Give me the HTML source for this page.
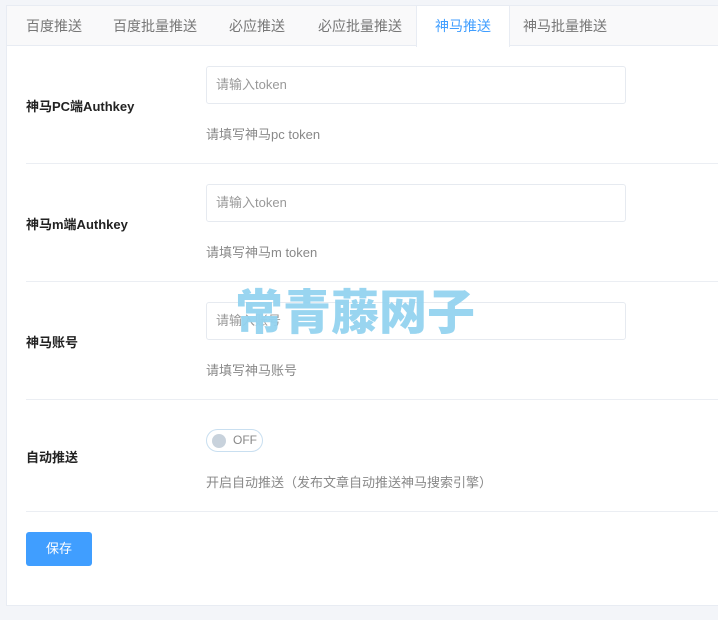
<!DOCTYPE html>
<html><head><meta charset="utf-8"><style>
*{margin:0;padding:0;box-sizing:border-box}
body{width:718px;height:620px;background:#f3f5f9;font-family:"Liberation Sans","Noto Sans CJK SC",sans-serif;position:relative;overflow:hidden}
.panel{position:absolute;left:6px;top:5px;width:712px;height:601px;background:#fff;border:1px solid #e8ecf3;border-right:none}
.tabs{position:absolute;left:0;top:0;width:712px;height:40px;background:#f9f9fa;border-bottom:1px solid #e8ecf3}
.tab{position:absolute;top:0;height:40px;line-height:40px;font-size:14px;color:#777}
.tab.on{background:#fff;color:#409eff;border-left:1px solid #e8ecf3;border-right:1px solid #e8ecf3;height:41px;text-align:center}
.lbl{position:absolute;left:19px;font-size:13px;font-weight:bold;color:#222}
.inp{position:absolute;left:199px;width:420px;height:38px;border:1px solid #e6eaf0;border-radius:3px;font-size:13px;color:#999;line-height:36px;padding-left:9px}
.help{position:absolute;left:199px;font-size:13px;color:#888}
.sep{position:absolute;left:19px;right:0;height:1px;background:#ebeef3}
.tog{position:absolute;left:199px;top:423px;width:57px;height:23px;border:1px solid #c9dff0;border-radius:12px;font-size:12px;color:#888;line-height:21px;padding-left:26px}
.tog:before{content:"";position:absolute;left:5px;top:4px;width:14px;height:14px;border-radius:50%;background:#c8d2dc}
.btn{position:absolute;left:19px;top:526px;width:66px;height:34px;background:#409eff;border-radius:3px;color:#fff;font-size:13px;text-align:center;line-height:34px}
.wm{position:absolute;left:235px;top:279px;font-size:48px;font-weight:900;color:#94d3f0;letter-spacing:0;opacity:.95;font-family:"Noto Sans CJK SC",sans-serif;line-height:58px}
</style></head><body>
<div class="panel">
<div class="tabs">
<div class="tab" style="left:19px">百度推送</div>
<div class="tab" style="left:106px">百度批量推送</div>
<div class="tab" style="left:222px">必应推送</div>
<div class="tab" style="left:311px">必应批量推送</div>
<div class="tab on" style="left:409px;width:94px">神马推送</div>
<div class="tab" style="left:516px">神马批量推送</div>
</div>
<div class="inp" style="top:60px">请输入token</div>
<div class="lbl" style="top:90px">神马PC端Authkey</div>
<div class="help" style="top:118px">请填写神马pc token</div>
<div class="sep" style="top:157px"></div>
<div class="inp" style="top:178px">请输入token</div>
<div class="lbl" style="top:208px">神马m端Authkey</div>
<div class="help" style="top:236px">请填写神马m token</div>
<div class="sep" style="top:275px"></div>
<div class="inp" style="top:296px">请输入账号</div>
<div class="lbl" style="top:326px">神马账号</div>
<div class="help" style="top:354px">请填写神马账号</div>
<div class="sep" style="top:393px"></div>
<div class="tog">OFF</div>
<div class="lbl" style="top:441px">自动推送</div>
<div class="help" style="top:466px">开启自动推送（发布文章自动推送神马搜索引擎）</div>
<div class="sep" style="top:505px"></div>
<div class="btn">保存</div>
</div>
<div class="wm">常青藤网子</div>
</body></html>
